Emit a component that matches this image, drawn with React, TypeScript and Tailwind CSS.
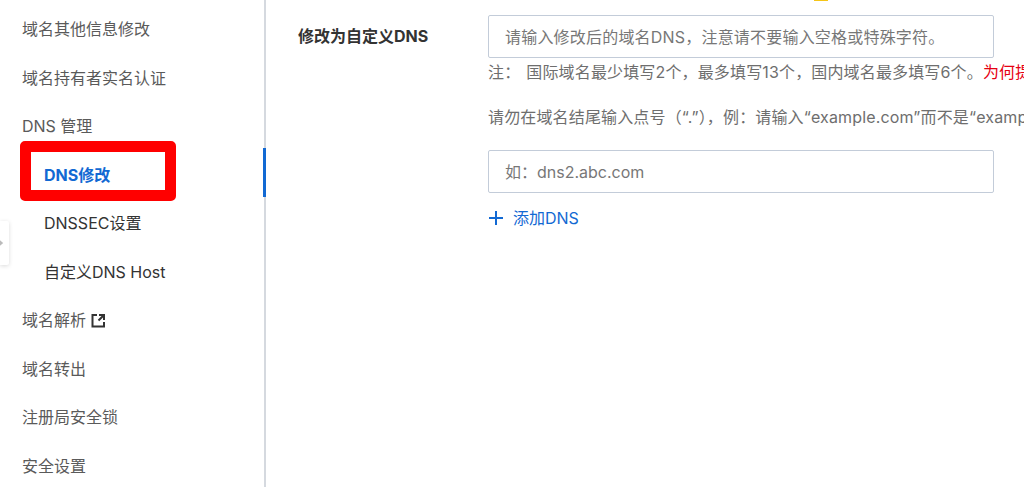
const font = "font-['Inter','Noto_Sans_CJK_SC',sans-serif]";

function MenuItem({ children, sub }: { children: React.ReactNode; sub?: boolean }) {
  return (
    <div className={`h-[48.5px] flex items-center text-[16px] ${sub ? "pl-[44px] text-[#333]" : "pl-[22px] text-[#5a5a5a]"}`}>
      {children}
    </div>
  );
}

export default function App() {
  return (
    <div className={`${font} w-[1024px] h-[487px] overflow-hidden bg-white flex relative`}>
      <aside className="relative w-[266px] shrink-0 h-full border-r-2 border-[#d5d9df] pt-[5px]">
        <MenuItem>域名其他信息修改</MenuItem>
        <MenuItem>域名持有者实名认证</MenuItem>
        <MenuItem>DNS 管理</MenuItem>
        <div className="h-[48.5px] flex items-center pl-[44px] text-[16px] font-bold text-[#1269d3]">DNS修改</div>
        <MenuItem sub>DNSSEC设置</MenuItem>
        <MenuItem sub>自定义DNS Host</MenuItem>
        <MenuItem>
          <span>域名解析</span>
          <svg className="ml-[5px]" width="15" height="15" viewBox="0 0 15 15" fill="none" stroke="#333" strokeWidth="2">
            <path d="M6 2H1.5v11.5H13V9" />
            <path d="M8 2h5v5M13 2 7.5 7.5" />
          </svg>
        </MenuItem>
        <MenuItem>域名转出</MenuItem>
        <MenuItem>注册局安全锁</MenuItem>
        <MenuItem>安全设置</MenuItem>
        <div className="absolute left-[20px] top-[141px] w-[156px] h-[60px] border-[11px] border-[#ff0000] rounded-[5px]" />
        <div className="absolute right-[-2px] top-[148px] w-[3px] h-[49px] bg-[#1269d3]" />
        <div className="absolute left-0 top-[221px] w-[9px] h-[44px] bg-white rounded-r-[2px] shadow-[0_1px_4px_rgba(0,0,0,0.15)] flex items-center">
          <svg width="4" height="6" viewBox="0 0 5 7" fill="#bbb"><path d="M0 0l4 3.5L0 7z" /></svg>
        </div>
      </aside>

      <main className="flex-1 relative pl-[32px] pt-[15px]">
        <div className="absolute left-[548px] top-0 w-[14px] h-[1px] bg-[#f5c518]" />
        <div className="flex">
          <div className="w-[190px] h-[42px] flex items-center text-[16px] font-bold text-[#333] shrink-0">修改为自定义DNS</div>
          <div className="whitespace-nowrap">
            <div className="w-[506px] h-[43px] border border-[#c3ccd9] rounded-[2px] flex items-center pl-[16px] text-[16px] tracking-[0.2px] text-[#777]">
              请输入修改后的域名DNS，注意请不要输入空格或特殊字符。
            </div>
            <div className="mt-[2px] h-[24px] flex items-center text-[16px] tracking-[0.15px] text-[#6e6e6e]">
              <span className="mr-[6px]">注：</span>
              <span>国际域名最少填写2个，最多填写13个，国内域名最多填写6个。</span>
              <span className="text-[#e60012]">为何提示</span>
            </div>
            <div className="mt-[21px] h-[24px] flex items-center text-[16px] tracking-[0.15px] text-[#6e6e6e]">
              请勿在域名结尾输入点号（“.”），例：请输入“example.com”而不是“example.com.”
            </div>
            <div className="mt-[21px] w-[506px] h-[43px] border border-[#c3ccd9] rounded-[2px] flex items-center pl-[16px] text-[16px] text-[#777]">
              如：dns2.abc.com
            </div>
            <div className="mt-[13px] h-[24px] flex items-center text-[16px] text-[#1269d3]">
              <svg className="mr-[9px]" width="16" height="16" viewBox="0 0 16 16" stroke="#1269d3" strokeWidth="2" fill="none">
                <path d="M8 1v14M1 8h14" />
              </svg>
              添加DNS
            </div>
          </div>
        </div>
      </main>
    </div>
  );
}
